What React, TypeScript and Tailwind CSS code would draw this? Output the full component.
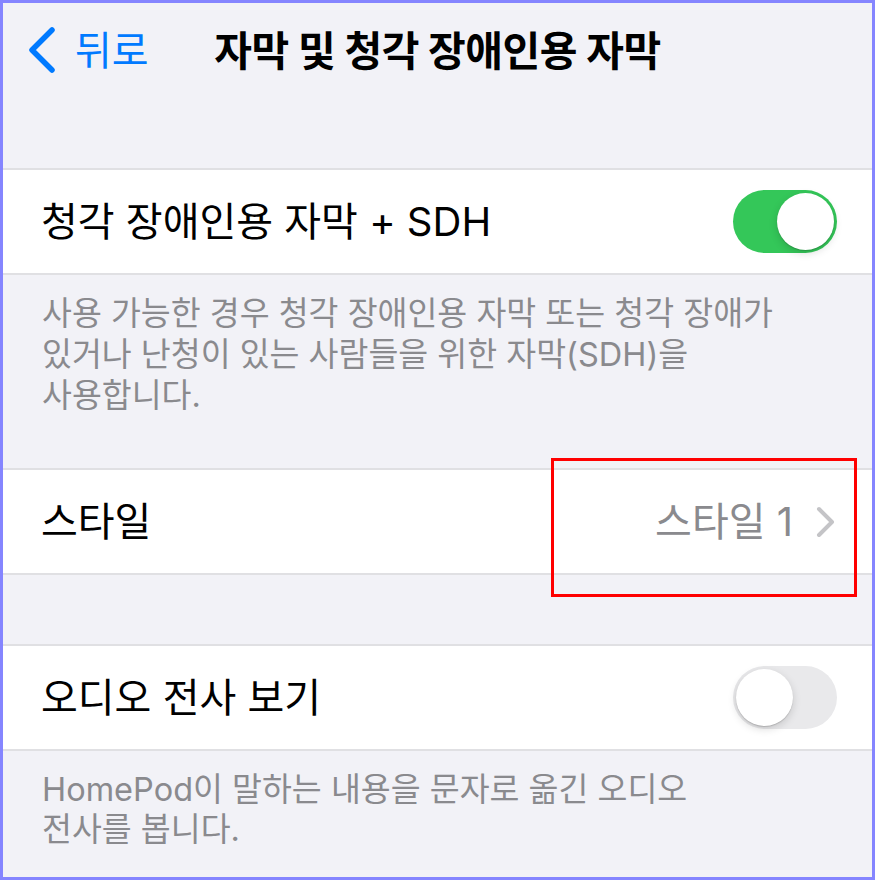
import React from "react";

function Toggle({ on }: { on: boolean }) {
  return (
    <div
      className={
        on
          ? "flex h-[63px] w-[104px] shrink-0 items-center justify-end rounded-full bg-[#34c759] p-[3px]"
          : "flex h-[63px] w-[104px] shrink-0 items-center justify-start rounded-full bg-[#e9e9eb] p-[3px]"
      }
    >
      <div className="h-[57px] w-[57px] rounded-full bg-white shadow-[0_3px_8px_rgba(0,0,0,0.15),0_1px_1px_rgba(0,0,0,0.16)]" />
    </div>
  );
}

function Chevron() {
  return (
    <svg width="20" height="32" viewBox="0 0 20 32" fill="none">
      <path d="M3 3 L16 16 L3 29" stroke="#c4c4c7" strokeWidth="4" strokeLinecap="round" strokeLinejoin="round" />
    </svg>
  );
}

export default function App() {
  return (
    <div className="relative h-[880px] w-[875px] overflow-hidden border-[3px] border-[#8585ff] bg-[#f2f2f7] font-['Inter','Noto_Sans_CJK_KR',sans-serif] text-black">
      {/* Nav bar */}
      <div className="grid h-[96px] grid-cols-[1fr_auto_1fr] items-center">
        <div className="flex items-center pl-[25px]">
          <svg width="30" height="50" viewBox="0 0 30 50" fill="none">
            <path d="M24 4 L4 24 L24 44" stroke="#007aff" strokeWidth="5.5" strokeLinecap="round" strokeLinejoin="round" />
          </svg>
          <span className="ml-[17px] text-[40px] leading-none text-[#007aff]">뒤로</span>
        </div>
        <div className="text-[41px] font-bold leading-none tracking-[-0.5px]">자막 및 청각 장애인용 자막</div>
        <div />
      </div>

      <div className="h-[69px]" />

      {/* Group 1 */}
      <div className="border-y-2 border-[#e0e0e3] bg-white">
        <div className="flex h-[103px] items-center justify-between pl-[38px] pr-[35px]">
          <span className="text-[40px] leading-none">청각 장애인용 자막 + SDH</span>
          <Toggle on />
        </div>
      </div>

      {/* Footer 1 */}
      <div className="h-[193px] pl-[39px] pt-[18px] text-[32.5px] leading-[41px] text-[#8a8a8e]">
        <div>사용 가능한 경우 청각 장애인용 자막 또는 청각 장애가</div>
        <div>있거나 난청이 있는 사람들을 위한 자막(SDH)을</div>
        <div>사용합니다.</div>
      </div>

      {/* Group 2 */}
      <div className="border-y-2 border-[#e0e0e3] bg-white">
        <div className="flex h-[103px] items-center justify-between pl-[38px] pr-[36px]">
          <span className="text-[40px] leading-none">스타일</span>
          <div className="flex items-center gap-[23px]">
            <span className="text-[40px] leading-none text-[#8a8a8e]">스타일 1</span>
            <Chevron />
          </div>
        </div>
      </div>

      <div className="h-[69px]" />

      {/* Group 3 */}
      <div className="border-y-2 border-[#e0e0e3] bg-white">
        <div className="flex h-[103px] items-center justify-between pl-[38px] pr-[35px]">
          <span className="text-[40px] leading-none">오디오 전사 보기</span>
          <Toggle on={false} />
        </div>
      </div>

      {/* Footer 2 */}
      <div className="pl-[39px] pt-[19px] text-[32.5px] leading-[40px] text-[#8a8a8e]">
        <div>HomePod이 말하는 내용을 문자로 옮긴 오디오</div>
        <div>전사를 봅니다.</div>
      </div>

      {/* Annotation overlay */}
      <div className="absolute left-[548px] top-[455px] h-[139px] w-[306px] border-[3px] border-[#ff0000]" />
    </div>
  );
}
